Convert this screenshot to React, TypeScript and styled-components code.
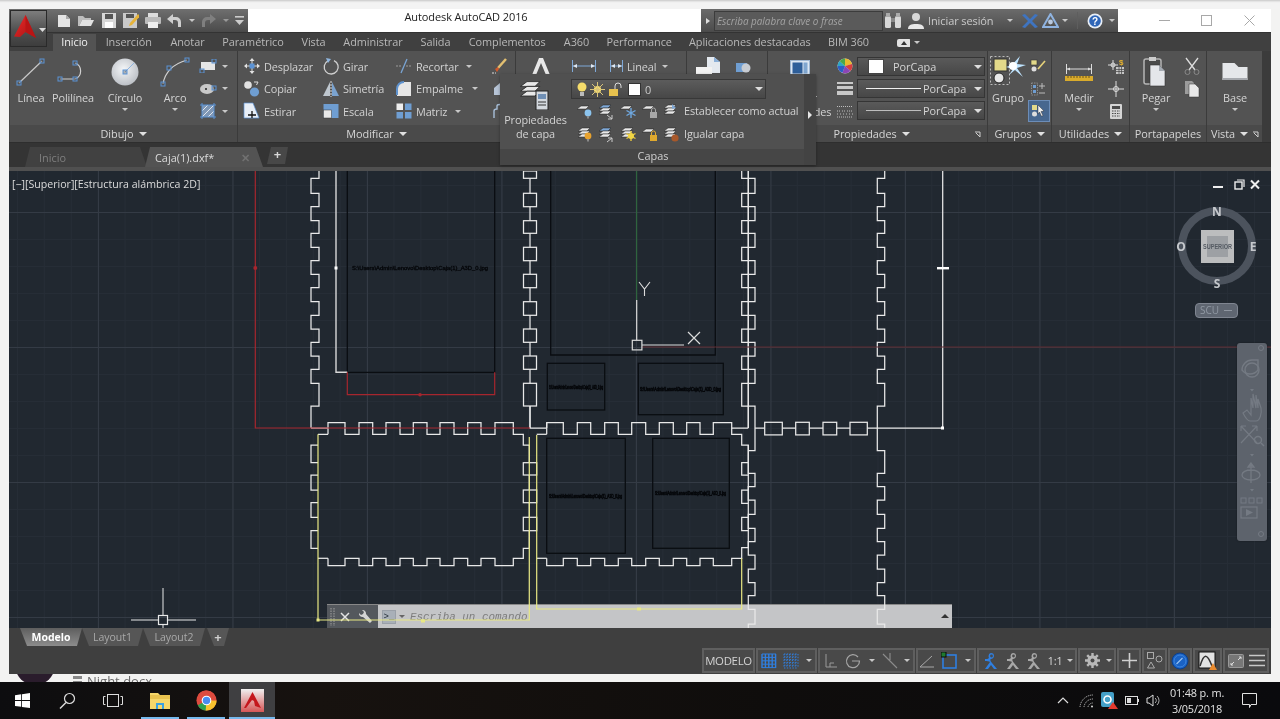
import React from 'react';
import styled, { createGlobalStyle } from 'styled-components';

const FONT = '"Open Sans","Noto Sans","Liberation Sans",sans-serif';
const BLUE = '#5b93d6';

const Global = createGlobalStyle`
  html, body { margin: 0; padding: 0; background: #f3f3f2; overflow: hidden; }
  #root { width: 1280px; height: 719px; }
  * { box-sizing: border-box; }
`;

const Page = styled.div`
  width: 1280px; height: 719px; overflow: hidden; display: flex; flex-direction: column;
  font-family: ${FONT}; font-size: 11px; background: #f3f3f2; color: #ddd; filter: blur(0.4px);
`;
const TopStrip = styled.div`
  height: 9px; flex: none;
  background: linear-gradient(#c9c9c9 0, #ededed 2px, #f3f3f3 3px);
`;
const Window = styled.div`
  position: relative; margin-left: 9px; width: 1262px; height: 665px; flex: none;
  display: flex; flex-direction: column; background: #3f3f3f;
`;

/* title bar */
const TitleBar = styled.div`display: flex; height: 23px; background: #fff; flex: none;`;
const QuickBar = styled.div`
  width: 239px; display: flex; align-items: center; padding-left: 44px;
  background: linear-gradient(#6f6f6f, #4a4a4a);
`;
const QuickSlot = styled.div<{ $w: number; $ml?: number }>`
  width: ${p => p.$w}px; margin-left: ${p => p.$ml ?? 0}px; height: 17px; display: flex; align-items: center; justify-content: center; flex: none;
`;
const AppTitle = styled.div`
  flex: 1; text-align: center; padding-right: 17px; color: #222; font-size: 11px; line-height: 16px; letter-spacing: -0.1px;
`;
const SearchGroup = styled.div`
  width: 417px; display: flex; align-items: center;
  background: linear-gradient(#6b6b6b, #4b4b4b);
`;
const SearchArrow = styled.span`
  width: 0; height: 0; margin: 0 4px 0 5px; border-left: 4px solid #ddd; border-top: 3px solid transparent; border-bottom: 3px solid transparent;
`;
const SearchField = styled.div`
  width: 169px; height: 20px; border: 1px solid #3c3c3c; background: #5a5a5a; color: #a3a3a3;
  font-style: italic; font-size: 9.9px; line-height: 18px; padding-left: 2px; white-space: nowrap; overflow: hidden;
`;
const SignIn = styled.span`color: #c9c9c9; font-size: 11px; width: 71px; white-space: nowrap; letter-spacing: -0.1px;`;
const SearchDivider = styled.span`width: 16px; height: 17px; flex: none; display: flex; justify-content: center;
  &::before { content: ''; width: 1px; height: 100%; background: #5e5e5e; }
`;
const WinButtons = styled.div`width: 153px; display: flex; padding-left: 25px;`;
const WinButton = styled.div`width: 42.5px; height: 23px; display: flex; align-items: center; justify-content: center;`;
const LogoButton = styled.div`
  position: absolute; left: 1px; top: 1px; width: 37px; height: 37px; z-index: 4;
  border: 1px solid #2a2a2a; background: linear-gradient(#7d7d7d, #505050 55%, #3d3d3d);
`;

/* ribbon tabs */
const TabBar = styled.div`display: flex; height: 19px; background: #404040; padding-left: 44px; flex: none; align-items: flex-end; border-top: 1px solid #333;`;
const RibbonTab = styled.div<{ $w: number; $on?: boolean }>`
  width: ${p => p.$w}px; height: 17px; text-align: center; line-height: 16px; font-size: 10.9px; white-space: nowrap;
  color: ${p => (p.$on ? '#f0f0f0' : '#b8b8b8')}; background: ${p => (p.$on ? '#535353' : 'transparent')};
  letter-spacing: -0.05px; flex: none;
`;

/* ribbon */
const Ribbon = styled.div`display: flex; height: 92px; flex: none; background: #444; padding-left: 1px; border-bottom: 1px solid #2e2e2e;`;
const Panel = styled.div<{ $w: number }>`
  width: ${p => p.$w}px; flex: none; display: flex; flex-direction: column; border-right: 1px solid #3b3b3b;
`;
const PanelBody = styled.div`height: 74px; background: #535353; display: flex; flex: none;`;
const PanelTitle = styled.div<{ $pr?: number }>`
  position: relative; flex: 1; background: #4a4a4a; display: flex; align-items: center; justify-content: center; gap: 5px;
  color: #d6d6d6; font-size: 10.9px; padding-right: ${p => p.$pr ?? 0}px; letter-spacing: -0.05px; white-space: nowrap;
`;
const Launcher = styled.span<{ $r?: number }>`position: absolute; right: ${p => p.$r ?? 6}px; top: 6px; display: flex;`;
const Caret = styled.span<{ $c?: string }>`
  display: inline-block; width: 0; height: 0; flex: none;
  border-top: 3px solid ${p => p.$c ?? '#c8c8c8'}; border-left: 3px solid transparent; border-right: 3px solid transparent;
`;
const TitleCaret = styled(Caret)`border-top-width: 4px; border-left-width: 4px; border-right-width: 4px; border-top-color: #e0e0e0;`;
const LargeTool = styled.div<{ $w: number }>`
  width: ${p => p.$w}px; flex: none; display: flex; flex-direction: column; align-items: center; padding-top: 5px;
`;
const LargeIcon = styled.div<{ $h?: number; $mt?: number }>`
  height: ${p => p.$h ?? 32}px; margin-top: ${p => p.$mt ?? 0}px; display: flex; align-items: center; justify-content: center;
`;
const LargeLabel = styled.div<{ $mt?: number }>`
  margin-top: ${p => p.$mt ?? 3}px; line-height: 14px; color: #d4d4d4; font-size: 10.9px; letter-spacing: -0.1px; text-align: center; white-space: nowrap;
`;
const LargeCaret = styled(Caret)`margin-top: 3px;`;
const ToolGrid = styled.div`display: flex; padding: 4px 0 0 5px;`;
const ToolColumn = styled.div<{ $w: number; $pt?: number }>`
  width: ${p => p.$w}px; padding-top: ${p => p.$pt ?? 0}px; flex: none; display: flex; flex-direction: column;
`;
const SmallTool = styled.div`height: 22.5px; display: flex; align-items: center; white-space: nowrap;`;
const IconSlot = styled.div<{ $w?: number; $on?: boolean; $ml?: number }>`
  width: ${p => p.$w ?? 18}px; margin-left: ${p => p.$ml ?? 0}px; height: 22px; flex: none; display: flex; align-items: center; justify-content: center;
  ${p => (p.$on ? 'background:#47678f;border:1px solid #6c8db8;' : '')}
`;
const SmallLabel = styled.span`margin-left: 3px; color: #d2d2d2; font-size: 10.9px; letter-spacing: -0.12px;`;
const SideCaret = styled(Caret)<{ $ml: number }>`margin-left: ${p => p.$ml}px;`;
const Combo = styled.div`
  width: 128px; height: 19px; margin-bottom: 3px; border: 1px solid #353535; display: flex; align-items: center; position: relative;
  background: linear-gradient(#5a5a5a, #474747); color: #d4d4d4; font-size: 10.9px; padding-right: 2px;
`;
const ComboCaret = styled(Caret)`position: absolute; right: 2px; top: 7px; border-top-width: 4px; border-left-width: 4px; border-right-width: 4px; border-top-color: #ddd;`;
const Swatch = styled.span`width: 16px; height: 15px; background: #fff; margin: 0 9px 0 10px; border: 1px solid #444; flex: none;`;
const ComboLine = styled.span<{ $w: number; $c: string }>`width: ${p => p.$w}px; height: 1px; background: ${p => p.$c}; margin: 0 2px 0 8px; flex: none;`;
const ComboStack = styled.div`width: 128px; padding-top: 6px; flex: none;`;
const RibbonEnd = styled.div`flex: 1; background: #3b3b3b;`;

/* Capas popup */
const Popup = styled.div`
  position: absolute; left: 491px; top: 65px; width: 316px; height: 91px; z-index: 3; display: flex;
  background: #505050; box-shadow: 0 1px 3px rgba(0,0,0,.35);
`;
const PopupContent = styled.div`width: 304px; display: flex; flex-direction: column;`;
const PopupMain = styled.div`height: 75px; display: flex; flex: none;`;
const PopupLeft = styled.div`width: 71px; display: flex; flex-direction: column; align-items: center; padding-top: 6px; flex: none;`;
const PopupRight = styled.div`flex: 1;`;
const LayerCombo = styled.div`
  position: relative; width: 195px; height: 20px; margin-top: 5px; display: flex; align-items: center; padding-left: 5px; gap: 3px;
  border: 1px solid #383838; background: linear-gradient(#5c5c5c, #474747); color: #ccc; font-size: 10.9px;
`;
const LayerSwatch = styled.span`width: 13px; height: 13px; background: #fff; border: 1px solid #333; margin: 0 1px 0 2px;`;
const LayerRow = styled.div`height: 23px; display: flex; align-items: center; padding-left: 3px; color: #d2d2d2; font-size: 10.9px; white-space: nowrap; letter-spacing: -0.12px;`;
const LayerSlot = styled.div`width: 21.6px; height: 20px; display: flex; align-items: center; justify-content: center; flex: none;`;
const LayerText = styled.span`margin-left: 2px;`;
const PopupTitle = styled.div`flex: 1; background: #464646; color: #d0d0d0; font-size: 10.9px; text-align: center; line-height: 14px; padding-left: 2px;`;
const PopupSide = styled.div`flex: 1; background: #434343; display: flex; align-items: center; justify-content: center; padding-bottom: 9px;`;
const SideArrow = styled.span`width: 0; height: 0; border-left: 4px solid #e6e6e6; border-top: 4px solid transparent; border-bottom: 4px solid transparent;`;

/* file tabs */
const FileBar = styled.div`display: flex; height: 28px; flex: none; background: #343434; padding: 4px 0 0 16px; border-bottom: 4px solid #505050;`;
const FileTab = styled.div<{ $on?: boolean; $w: number; $ml?: number; $pl: number }>`
  width: ${p => p.$w}px; margin-left: ${p => p.$ml ?? 0}px; padding: 0 13px 0 ${p => p.$pl}px; height: 20px; flex: none;
  display: flex; align-items: center; justify-content: space-between; white-space: nowrap; font-size: 10.9px;
  color: ${p => (p.$on ? '#dadada' : '#7f7f7f')}; background: ${p => (p.$on ? '#535353' : '#414141')};
  clip-path: polygon(0 100%, 5px 0, calc(100% - 7px) 0, 100% 100%);
`;
const CloseMark = styled.span`color: #717171; font-size: 11px; font-weight: 700;`;
const AddTab = styled.div<{ $ml: number; $w: number; $h: number; $c: string }>`
  margin-left: ${p => p.$ml}px; width: ${p => p.$w}px; height: ${p => p.$h}px; flex: none;
  background: ${p => p.$c}; color: #d8d8d8; font-weight: 700; font-size: 13px; text-align: center; line-height: ${p => p.$h - 2}px;
  clip-path: polygon(0 100%, 4px 0, 100% 0, calc(100% - 3px) 100%);
`;

/* canvas */
const Canvas = styled.div`
  position: relative; height: 457px; flex: none; overflow: hidden; background-color: #212830;
  background-image:
    linear-gradient(to right, #343b45 1px, transparent 1px),
    linear-gradient(to bottom, #343b45 1px, transparent 1px),
    linear-gradient(to right, #262d36 1px, transparent 1px),
    linear-gradient(to bottom, #262d36 1px, transparent 1px);
  background-size: 134.5px 135px, 134.5px 135px, 26.9px 27px, 26.9px 27px;
  background-position: 89px 41px, 89px 41px, 8px 14px, 8px 14px;
`;
const ViewLabel = styled.div`position: absolute; left: 3px; top: 6px; color: #dcdcdc; font-size: 10.6px; z-index: 3; white-space: nowrap;`;
const DrawingSvg = styled.svg`position: absolute; left: 0; top: 0; z-index: 2; pointer-events: none;`;
const ViewButtons = styled.svg`position: absolute; left: 1203px; top: 8px; z-index: 3;`;
const CubeSvg = styled.svg`position: absolute; left: 1165px; top: 33px; z-index: 3;`;
const ScuPill = styled.div`
  position: absolute; left: 1186px; top: 132px; width: 43px; height: 15px; border-radius: 4px; z-index: 3;
  background: #5f6671; border: 1px solid #7f8590; color: #9098a3; font-size: 10px; line-height: 13px; padding-left: 4px; display: flex; align-items: center; gap: 5px;
`;
const ScuDash = styled.span`width: 8px; height: 1px; background: #8f96a0;`;
const NavBar = styled.div`
  position: absolute; left: 1228px; top: 172px; width: 30px; height: 198px; border-radius: 3px; z-index: 3;
  background: #5d636c; box-shadow: 0 0 2px rgba(0,0,0,.4);
`;
const CommandBar = styled.div`
  position: absolute; left: 318px; bottom: 0; width: 625px; height: 24px; z-index: 1; display: flex;
  background: #c4c5c7; border-top: 1px solid #888;
`;
const CommandTools = styled.div`
  width: 51px; flex: none; display: flex; align-items: center; background: #54585d; padding-left: 3px;
`;
const CommandPrompt = styled.div`
  flex: 1; display: flex; align-items: center; padding-left: 4px; position: relative;
`;
const PromptIcon = styled.div`
  width: 14px; height: 14px; border: 1px solid #9aa0a8; background: #a9b0b8; color: #26303a; font-family: "Liberation Mono", monospace;
  font-size: 9px; line-height: 12px; text-align: center; margin-right: 3px;
`;
const CommandText = styled.span`
  margin-left: 5px; font-family: "Liberation Mono", monospace; font-style: italic; font-size: 10.9px; color: #7d7d7d; white-space: nowrap;
`;
const CommandEnd = styled.span`
  position: absolute; right: 3px; top: 9px; width: 0; height: 0; border-bottom: 4px solid #333; border-left: 4px solid transparent; border-right: 4px solid transparent;
`;

/* bottom */
const BottomArea = styled.div`flex: 1; background: #3f3f3f; display: flex; flex-direction: column;`;
const LayoutTabs = styled.div`height: 19px; display: flex; padding-left: 11px; flex: none;`;
const LayoutTab = styled.div<{ $on?: boolean; $w: number }>`
  width: ${p => p.$w}px; height: 18px; flex: none; text-align: center; line-height: 18px; font-size: 10.5px;
  font-weight: ${p => (p.$on ? 700 : 400)}; color: ${p => (p.$on ? '#fff' : '#a9a9a9')};
  background: ${p => (p.$on ? 'linear-gradient(#5e5e5e,#8c8c8c)' : '#565656')};
  clip-path: polygon(0 0, 100% 0, calc(100% - 5px) 100%, 7px 100%);
`;
const LayoutPlus = styled(LayoutTab)`width: 22px; margin-left: 2px; font-size: 13px; font-weight: 700; color: #cfcfcf;`;
const StatusBar = styled.div`height: 25px; margin-top: 1px; display: flex; justify-content: flex-end; padding-right: 2px; gap: 1px; flex: none;`;
const StatusGroup = styled.div<{ $w: number }>`
  width: ${p => p.$w}px; flex: none; display: flex; align-items: center; border: 2px solid #5f5f5f; background: #494949;
`;
const StatusCell = styled.div<{ $w?: number }>`
  ${p => (p.$w ? `width:${p.$w}px;flex:none;` : 'flex:1;')} height: 100%; display: flex; align-items: center; justify-content: center;
  color: #d2d2d2; font-size: 11.4px; letter-spacing: -0.3px; white-space: nowrap;
`;

/* desktop */
const GapStrip = styled.div`height: 8px; flex: none; position: relative; overflow: hidden; display: flex; background: #f3f3f2;`;
const Portrait = styled.div`width: 40px; height: 40px; margin: -29px 0 0 15px; border-radius: 50%; background: #2a1c2c; flex: none;`;
const DocName = styled.div`margin-left: 18px; color: #6a6a6a; font-size: 13px; line-height: 15px; display: flex; gap: 5px; white-space: nowrap;`;
const DocGlyph = styled.span`width: 9px; height: 12px; border-top: 2px solid #888; margin-top: 2px; background: repeating-linear-gradient(#888 0 1px, transparent 1px 3px);`;
const Taskbar = styled.div`
  height: 37px; flex: none; display: flex; align-items: center; position: relative;
  background: linear-gradient(90deg, #0d0d0f, #17120f 25%, #0f0d0c 60%, #0a0a0d);
`;
const TaskSlot = styled.div<{ $w: number }>`width: ${p => p.$w}px; height: 37px; flex: none; display: flex; align-items: center; justify-content: center;`;
const TaskApp = styled.div<{ $on?: boolean }>`
  width: 46px; height: 37px; flex: none; display: flex; align-items: center; justify-content: center; position: relative;
  background: ${p => (p.$on ? '#3f3f41' : 'transparent')};
  &::after { content: ''; position: absolute; bottom: 0; left: ${p => (p.$on ? 0 : 4)}px; right: ${p => (p.$on ? 0 : 4)}px; height: 2px; background: #76b9ed; }
`;
const TrayArea = styled.div`margin-left: auto; display: flex; align-items: center;`;
const TrayIcon = styled.div<{ $w: number }>`width: ${p => p.$w}px; display: flex; justify-content: center; flex: none;`;
const Clock = styled.div`width: 64px; text-align: center; color: #e2e2e2; font-size: 10.9px; line-height: 16px; white-space: nowrap; letter-spacing: -0.15px;`;

/* ----- icons ----- */
const Sq = ({ x, y }: { x: number; y: number }) => <rect x={x - 2} y={y - 2} width="4" height="4" fill="#53535366" stroke={BLUE} strokeWidth="1" />;

const LineIcon = () => (<svg width="30" height="28"><line x1="3" y1="25" x2="26" y2="3" stroke="#c8c8c8" strokeWidth="1.2" /><Sq x={3} y={25} /><Sq x={26} y={3} /></svg>);
const PolyIcon = () => (<svg width="32" height="28"><path d="M3 21H18A8.5 8.5 0 0 0 18 5" fill="none" stroke="#d0d0d0" strokeWidth="1.2" /><Sq x={3} y={21} /><Sq x={18} y={21} /><Sq x={18} y={5} /></svg>);
const CircleIcon = () => (<svg width="30" height="30"><defs><radialGradient id="cg" cx="45%" cy="40%" r="65%"><stop offset="0" stopColor="#f4f6f8" /><stop offset="1" stopColor="#b8bcc2" /></radialGradient></defs><circle cx="15" cy="15" r="13.5" fill="url(#cg)" /><line x1="15" y1="15" x2="24" y2="6" stroke="#8db4e0" /><Sq x={15} y={15} /></svg>);
const ArcIcon = () => (<svg width="30" height="30"><path d="M3 27Q6 9 27 3" fill="none" stroke="#d0d0d0" strokeWidth="1.2" /><Sq x={3} y={27} /><Sq x={9} y={11} /><Sq x={27} y={3} /></svg>);
const RectIcon = () => (<svg width="18" height="14"><rect x="2" y="3" width="14" height="8" fill="#e6e6e6" /><Sq x={3} y={12} /><Sq x={15} y={2} /></svg>);
const BlobIcon = () => (<svg width="18" height="14"><ellipse cx="8" cy="7" rx="7" ry="5" fill="#c9c9c9" /><circle cx="7" cy="7" r="1" fill="#222" /><Sq x={15} y={6} /></svg>);
const HatchIcon = () => (<svg width="18" height="18"><rect x="3" y="3" width="12" height="12" fill="#7f97b5" /><path d="M3 9l6-6M3 15L15 3M9 15l6-6" stroke="#dfe6ef" /><path d="M3 1v16M15 1v16M1 3h16M1 15h16" stroke={BLUE} fill="none" /></svg>);
const MoveIcon = () => (<svg width="18" height="18"><path d="M9 1L6.5 4h5zM9 17l-2.5-3h5zM1 9l3-2.5v5zM17 9l-3-2.5v5z" fill="#e2e2e2" /><path d="M9 4v10M4 9h10" stroke="#ddd" /><rect x="6.5" y="6.5" width="5" height="5" fill={BLUE} /></svg>);
const CopyIcon = () => (<svg width="18" height="18"><circle cx="5" cy="5" r="3.8" fill="#e2e2e2" /><circle cx="11.5" cy="12" r="4.6" fill="#6f9ed2" /><path d="M11 2h4l-1.5 3" fill="none" stroke="#ddd" /></svg>);
const StretchIcon = () => (<svg width="18" height="18"><path d="M1 1h9l6 15H1z" fill="#e8eef6" stroke="#5b93d6" strokeWidth=".7" /><path d="M9 9v7M5 13h8" stroke="#111" strokeWidth="1.3" /></svg>);
const RotateIcon = () => (<svg width="18" height="18"><path d="M6 3.8a7 7 0 1 0 6-.2" fill="none" stroke="#d0d0d0" strokeWidth="1.3" /><path d="M4 1l5 1-3 4z" fill="#8fb5de" /></svg>);
const MirrorIcon = () => (<svg width="18" height="18"><path d="M1 16L8 2v14z" fill="#bfc7cf" /><path d="M17 16L10 2v14z" fill="#7ba3cf" /><path d="M9 1v16" stroke="#ddd" strokeDasharray="2 1" /></svg>);
const ScaleIcon = () => (<svg width="18" height="18"><rect x="1.5" y="2" width="15" height="14" fill="#6f9ed2" /><rect x="1.5" y="8" width="8" height="8" fill="#e8e8e8" stroke="#333" strokeWidth=".5" /></svg>);
const TrimIcon = () => (<svg width="18" height="18"><path d="M1 9h6M11 9h6" stroke="#9c9c9c" strokeDasharray="2 1" /><path d="M6 16L12 2" stroke="#79a4d4" strokeWidth="1.3" /></svg>);
const FilletIcon = () => (<svg width="18" height="18"><path d="M2 16V9a7 7 0 0 1 7-7h7v14z" fill="#e6e6e6" /><path d="M2 15V9a7 7 0 0 1 7-7" fill="none" stroke="#5f93cf" strokeWidth="2" /></svg>);
const ArrayIcon = () => (<svg width="18" height="18"><rect x="1.5" y="1.5" width="6.5" height="6.5" fill="#eee" /><rect x="10" y="1.5" width="6.5" height="6.5" fill="#6f9ed2" /><rect x="1.5" y="10" width="6.5" height="6.5" fill="#6f9ed2" /><rect x="10" y="10" width="6.5" height="6.5" fill="#6f9ed2" /></svg>);
const BrushIcon = () => (<svg width="18" height="18"><path d="M15 2L7 11" stroke="#e2bf71" strokeWidth="2.5" /><path d="M4 12l3-2 1 2-2 3z" fill="#d2592b" /><path d="M1 16h4" stroke="#ddd" strokeDasharray="2 1" /></svg>);
const CubeSmall = () => (<svg width="18" height="18"><path d="M3 8l6-5v12H3z" fill="#b6c4d6" /><path d="M9 3h6v12H9z" fill="#7ea6d2" /></svg>);
const ChainIcon = () => (<svg width="18" height="18"><path d="M3 16V9c0-2 2-2 3-2V4c0-2 5-2 5 0v5h4v6" fill="none" stroke="#a8bfd9" strokeWidth="1.4" /></svg>);
const TextIcon = () => (<svg width="24" height="22"><path d="M3 20L10 3h4l7 17h-4L12 8 7 20z" fill="#e8e8e8" /></svg>);
const DimIcon = ({ w }: { w: number }) => (<svg width={w} height="14"><path d={`M1.5 1v12M${w - 1.5} 1v12M2 7H${w - 2}`} stroke="#7fa9d8" strokeWidth="1" fill="none" /><path d={`M2 7l4-2v4zM${w - 2} 7l-4-2v4z`} fill="#dfe8f2" /></svg>);
const InsertIcon = () => (<svg width="30" height="22"><path d="M12 1h7l6 5v11H12z" fill="#e4e9ef" /><path d="M19 1v5h6z" fill="#8cb0d8" /><rect x="1" y="11" width="16" height="7" fill="#f2f2f2" /></svg>);
const BlockIcon = () => (<svg width="18" height="16"><rect x="2" y="5" width="11" height="9" fill="#6f9ed2" /><circle cx="12" cy="10" r="4.5" fill="#c8ccd2" /></svg>);
const MatchIcon = () => (<svg width="20" height="16"><rect x=".5" y=".5" width="19" height="15" fill="#dce7f3" stroke="#9fb7d2" /><rect x="2.5" y="2.5" width="10" height="11" fill="#2e5f9a" /><rect x="13.5" y="2.5" width="4" height="11" fill="#7fa6d0" /></svg>);
const WheelIcon = () => (<svg width="16" height="16" viewBox="0 0 16 16"><circle cx="8" cy="8" r="7.5" fill="#d9d9d9" /><path d="M8 8V.5A7.5 7.5 0 0 1 15 6z" fill="#e8b92f" /><path d="M8 8l7-2a7.5 7.5 0 0 1-1.5 7z" fill="#d63f3f" /><path d="M8 8l5.5 5a7.5 7.5 0 0 1-8 1.7z" fill="#8c45b5" /><path d="M8 8l-2.5 6.7A7.5 7.5 0 0 1 .5 8z" fill="#2d5fc4" /><path d="M8 8H.5A7.5 7.5 0 0 1 2.5 3z" fill="#2da5c4" /><path d="M8 8L2.5 3A7.5 7.5 0 0 1 8 .5z" fill="#49a84a" /></svg>);
const WeightIcon = () => (<svg width="16" height="15"><rect x="0" y="1" width="16" height="2" fill="#c8c8c8" /><rect x="0" y="5" width="16" height="3" fill="#c8c8c8" /><rect x="0" y="10" width="16" height="4" fill="#c8c8c8" /></svg>);
const TypeIcon = () => (<svg width="16" height="13"><path d="M0 1.5h16M0 6h3M5 6h3M10 6h3M14 6h2M0 9h1M3 9h1M6 9h1M9 9h1M12 9h1M15 9h1M0 12h16" stroke="#bdbdbd" strokeDasharray="1 1" /></svg>);
const GroupIcon = () => (<svg width="36" height="32"><rect x=".5" y=".5" width="19" height="28" fill="none" stroke="#bbb" strokeDasharray="2 2" /><rect x="4" y="3" width="13" height="12" fill="#e2d98a" stroke="#333" /><circle cx="9" cy="22" r="5" fill="#e8e8e8" stroke="#222" /><path d="M22 9L30 0l-3 8 9 1-9 3 6 9-8-7-6 5 4-6-7-2z" fill="#bfe4ff" /><circle cx="23" cy="10" r="4" fill="#fff" /></svg>);
const GroupEditIcon = () => (<svg width="16" height="14"><rect x="1" y="1" width="6" height="5" fill="#e2d98a" stroke="#333" strokeWidth=".6" /><circle cx="4" cy="10" r="2.5" fill="#ddd" /><path d="M8 10l7-8" stroke="#e6d27a" strokeWidth="1.6" /></svg>);
const GroupPlusIcon = () => (<svg width="16" height="14"><rect x="1.5" y="1" width="6" height="12" fill="none" stroke="#8d8d8d" strokeDasharray="1.5 1" /><rect x="3" y="3" width="3" height="3" fill="#6f9ed2" /><rect x="3" y="8" width="3" height="3" fill="#6f9ed2" /><path d="M12 1v6M9 4h6M9 11h6" stroke="#bbb" /></svg>);
const GroupSelIcon = () => (<svg width="16" height="14"><rect x="1" y="1" width="5" height="5" fill="#e2d98a" /><circle cx="3.5" cy="10" r="2.5" fill="#ddd" /><path d="M7 1l6 6-3 .5 2 4-1.5.8L8.5 8 7 10z" fill="#eee" stroke="#222" strokeWidth=".4" /></svg>);
const RulerIcon = () => (<svg width="28" height="22"><path d="M1.5 3v10M26.5 3v10" stroke="#ddd" /><path d="M2 8h24" stroke="#ddd" /><path d="M2 8l3-1.6v3.2zM26 8l-3-1.6v3.2z" fill="#ddd" /><rect x="0" y="15" width="28" height="5" fill="#d9ab2c" /><path d="M3 15v2M6 15v2M9 15v2M12 15v2M15 15v2M18 15v2M21 15v2M24 15v2" stroke="#6f541a" /></svg>);
const IdIcon = () => (<svg width="18" height="17"><path d="M6 2v10M1 7h10" stroke="#ddd" /><circle cx="6" cy="7" r="2" fill="none" stroke="#ddd" /><rect x="9" y="9" width="8" height="7" fill="#c6c6c6" /><path d="M9 11.5h8M9 13.5h8M12 9v7M14.5 9v7" stroke="#444" strokeWidth=".7" /><text x="12" y="7" fontSize="8" fontWeight="700" fill="#e8b42e" fontFamily="Liberation Sans">$</text></svg>);
const PointIcon = () => (<svg width="18" height="16"><path d="M9 0v16M1 8h16" stroke="#ddd" /><circle cx="9" cy="8" r="2.5" fill="none" stroke="#ddd" /></svg>);
const CalcIcon = () => (<svg width="12" height="15"><rect width="12" height="15" rx="1" fill="#d5d5d5" /><rect x="2" y="2" width="8" height="3" fill="#4a4a4a" /><path d="M2 7h8M2 9.5h8M2 12h8" stroke="#4a4a4a" strokeDasharray="1.5 1" /></svg>);
const PasteIcon = () => (<svg width="26" height="32"><rect x="1" y="3" width="17" height="25" rx="2" fill="#4a4a4a" stroke="#b5b5b5" strokeWidth="1.5" /><rect x="6" y="1" width="7" height="4" fill="#ccc" /><path d="M7 9h9l6 6v15H7z" fill="#e4e6ea" stroke="#333" strokeWidth=".6" /><path d="M16 9v6h6" fill="#a5abb3" /></svg>);
const ScissorsIcon = () => (<svg width="16" height="18"><path d="M2 1l9 12M14 1L5 13" stroke="#ddd" strokeWidth="1.3" /><circle cx="3.5" cy="15" r="2.5" fill="none" stroke="#888" /><circle cx="12.5" cy="15" r="2.5" fill="none" stroke="#888" /></svg>);
const CopyDocIcon = () => (<svg width="16" height="18"><path d="M1 1h7l2 2v11H1z" fill="#9c9c9c" /><path d="M5 4h6l4 4v9H5z" fill="#e8e8e8" stroke="#333" strokeWidth=".5" /></svg>);
const BaseIcon = () => (<svg width="26" height="20"><path d="M.5 1h12l4 4h9v13H.5z" fill="#e5e7ea" /><path d="M.5 17h25" stroke="#a6a9ae" strokeWidth="2" /></svg>);
const LauncherIcon = () => (<svg width="7" height="7"><path d="M1 1h5v5M6 6L2 2" stroke="#cfcfcf" fill="none" /></svg>);

const Stack = ({ blue, n = 3 }: { blue?: boolean; n?: number }) => (
  <>{Array.from({ length: n }).map((_, i) => (<path key={i} d={`M1 ${4 + i * 3}L5 ${1 + i * 3}h8L10 ${4 + i * 3}z`} fill={blue && i === 0 ? '#7fa8d6' : '#e8e8e8'} stroke="#222" strokeWidth=".5" />))}</>
);
const L = ({ n = 1, blue, children }: { n?: number; blue?: boolean; children?: React.ReactNode }) => (<svg width="20" height="18"><g transform={n === 1 ? 'translate(1,3)' : 'translate(2,2)'}><Stack n={n} blue={blue} /></g>{children}</svg>);
const Bulb = ({ c }: { c: string }) => (<g><circle cx="13" cy="11" r="3.4" fill={c} /><rect x="12" y="14" width="2" height="2.5" fill="#8a8a8a" /></g>);
const Snow = ({ c }: { c: string }) => (<path d="M13 6v10M8.5 8.5l9 5M17.5 8.5l-9 5" stroke={c} strokeWidth="1.4" />);
const Lk = ({ c }: { c: string }) => (<g><rect x="10" y="10" width="7" height="6" fill={c} /><path d="M11.5 10V8a2 2 0 0 1 4 0v2" fill="none" stroke={c} /></g>);

const BigStack = () => (<svg width="34" height="30"><g transform="scale(1.6)"><Stack n={3} /></g><rect x="17" y="11" width="12" height="19" fill="#d3d8de" stroke="#222" /><rect x="19" y="14" width="8" height="5" fill="#6f8fb5" /><path d="M19 22h8M19 25h8" stroke="#333" /></svg>);

const LogoA = () => (
  <svg width="35" height="35">
    <defs><linearGradient id="ra" x1="0" y1="0" x2="1" y2="1"><stop offset="0" stopColor="#ec2a2a" /><stop offset="1" stopColor="#a51212" /></linearGradient></defs>
    <path d="M14.5 4L3 25.500l6 .5 5.500-5 8 4.500 2.500 1.500z" fill="url(#ra)" />
    <path d="M14.500 4L25 27l-10.500-6z" fill="#b91515" />
    <path d="M28 17h7l-3.500 4z" fill="#dcdcdc" />
  </svg>
);

const QNew = () => (<svg width="16" height="16"><path d="M2 2h8l4 4v8H2z" fill="#e4e4e4" /><path d="M10 2v4h4" fill="#aaa" /></svg>);
const QOpen = () => (<svg width="18" height="14"><path d="M1 12V2h5l2 2h6v2H5l-3 6z" fill="#bdbdbd" /><path d="M2 12l3-6h12l-3 6z" fill="#e2e2e2" /></svg>);
const QSave = () => (<svg width="14" height="15"><rect width="14" height="15" fill="#d7d7d7" /><rect x="3" y="1" width="8" height="5" fill="#555" /><rect x="3" y="9" width="8" height="6" fill="#fff" /></svg>);
const QSaveAs = () => (<svg width="16" height="15"><rect width="14" height="15" fill="#c9c9c9" /><rect x="3" y="1" width="8" height="4" fill="#555" /><path d="M15 1l-8 9-1 3 3-1 8-9z" fill="#e6b338" /></svg>);
const QPrint = () => (<svg width="16" height="15"><rect x="3" y="0" width="10" height="4" fill="#ddd" /><rect y="4" width="16" height="7" rx="1" fill="#bbb" /><rect x="3" y="9" width="10" height="6" fill="#eee" /></svg>);
const QUndo = ({ dim }: { dim?: boolean }) => (<svg width="14" height="13"><path d="M0 5l6-5v3h3a5 5 0 0 1 5 5v5h-3V9a3 3 0 0 0-3-3H6v4z" fill={dim ? '#7f7f7f' : '#cfcfcf'} transform={dim ? 'translate(14,0) scale(-1,1)' : ''} /></svg>);
const QMenu = () => (<svg width="9" height="9"><rect width="9" height="1.6" fill="#ccc" /><path d="M0 4h9L4.5 9z" fill="#ccc" /></svg>);

const Binoculars = () => (<svg width="18" height="16"><rect x="1" y="3" width="6" height="12" rx="1.5" fill="#d8d8d8" /><rect x="11" y="3" width="6" height="12" rx="1.5" fill="#d8d8d8" /><rect x="2" y="0" width="4" height="4" fill="#aaa" /><rect x="12" y="0" width="4" height="4" fill="#aaa" /><rect x="7" y="5" width="4" height="4" fill="#888" /></svg>);
const UserIcon = () => (<svg width="16" height="17"><circle cx="8" cy="5" r="4" fill="#d8d8d8" /><path d="M0 17c0-4 3-5 8-5s8 1 8 5z" fill="#e6e6e6" /></svg>);
const XIcon = () => (<svg width="18" height="14"><path d="M1 1l3-1 5 5 5-5 3 1-6 6 6 6-3 1-5-5-5 5-3-1 6-6z" fill="#3f74c0" /></svg>);
const TriIcon = () => (<svg width="17" height="15"><path d="M8.5 1L16 14H1z" fill="none" stroke="#8fb3e0" strokeWidth="2" /><circle cx="8.5" cy="9" r="2.4" fill="#b9c9df" /></svg>);
const HelpIcon = () => (<svg width="16" height="16"><circle cx="8" cy="8" r="7.5" fill="#e8eef6" /><circle cx="8" cy="8" r="5.8" fill="#2f66b8" /><text x="8" y="11.5" textAnchor="middle" fontSize="10" fontWeight="700" fontFamily="Liberation Sans" fill="#fff">?</text></svg>);
const CloudIcon = () => (<svg width="14" height="8"><rect width="14" height="8" rx="2" fill="#e2e2e2" /><path d="M4 6h6L7 2z" fill="#333" /></svg>);

/* status icons */
const GridIcon = ({ fine }: { fine?: boolean }) => (<svg width="16" height="16">{Array.from({ length: fine ? 6 : 5 }).map((_, i) => (<g key={i}><path d={`M${1 + i * (fine ? 2.8 : 3.4)} 1V15`} stroke="#2f7fe0" strokeWidth={fine ? 1 : 1.4} strokeDasharray={fine ? '1.4 1.4' : undefined} /><path d={`M1 ${1 + i * (fine ? 2.8 : 3.4)}H15`} stroke="#2f7fe0" strokeWidth={fine ? 1 : 1} strokeDasharray={fine ? '1.4 1.4' : undefined} /></g>))}</svg>);
const OrthoIcon = () => (<svg width="14" height="16"><path d="M2 1v13h11" fill="none" stroke="#9a9a9a" /><path d="M6 14v-4h4" fill="none" stroke="#9a9a9a" /></svg>);
const PolarIcon = () => (<svg width="16" height="16"><path d="M13 4a6.5 6.5 0 1 0 1.5 4H7" fill="none" stroke="#a5a5a5" strokeWidth="1.2" /></svg>);
const IsoIcon = () => (<svg width="18" height="18"><path d="M2 2l14 14M9 1v7" stroke="#8d8d8d" strokeWidth="1.1" /></svg>);
const AngleIcon = () => (<svg width="16" height="16"><path d="M1 14h14M1 14L13 3" stroke="#a8a8a8" fill="none" /></svg>);
const SnapIcon = () => (<svg width="17" height="17"><rect x="2" y="3" width="13" height="13" fill="none" stroke="#2f7fe0" strokeWidth="1.6" /><rect x="0" y="0" width="5" height="5" fill="#1f7a2e" stroke="#0a0a0a" /></svg>);
const AnnoIcon = ({ c }: { c: string }) => (<svg width="18" height="18"><path d="M9 1c2 0 3 1 3 3s-2 3-3 3-1 2 1 4l5 6h-3l-3-4-3 4H3l5-7c-1-1-3-1-5-1V7c2 0 3 0 4-1-1-2 0-5 2-5z" fill={c} /><circle cx="9.5" cy="4" r="1.4" fill="#494949" /></svg>);
const GearIcon = () => (<svg width="15" height="15"><circle cx="7.5" cy="7.5" r="5.2" fill="#b8b8b8" /><path d="M7.5 0v15M0 7.5h15M2.2 2.2l10.6 10.6M12.8 2.2L2.2 12.8" stroke="#b8b8b8" strokeWidth="2.4" /><circle cx="7.5" cy="7.5" r="2" fill="#494949" /></svg>);
const PlusIcon = () => (<svg width="15" height="15"><path d="M7.5 0v15M0 7.5h15" stroke="#d0d0d0" strokeWidth="1.6" /></svg>);
const ShapesIcon = () => (<svg width="16" height="17"><rect x=".5" y=".5" width="6" height="6" fill="none" stroke="#aaa" /><circle cx="12" cy="7" r="3" fill="none" stroke="#aaa" /><path d="M4 10l3.5 6H.5z" fill="none" stroke="#aaa" /></svg>);
const BlueCircle = () => (<svg width="18" height="18"><circle cx="9" cy="9" r="8" fill="#1a62c4" stroke="#0c3f8a" /><path d="M5.5 12l6-6" stroke="#9cc4f0" strokeWidth="1.1" /><circle cx="9" cy="9" r="6" fill="none" stroke="#3d84dc" /></svg>);
const GraphIcon = () => (<svg width="20" height="19"><rect x="1" y="1" width="16" height="16" fill="#e2e2e2" stroke="#111" /><path d="M2 15c4-13 7-13 12 0" fill="none" stroke="#333" strokeWidth="1.6" /><path d="M15 12l4 7h-8z" fill="#e88a2e" /></svg>);
const FullIcon = () => (<svg width="16" height="14"><rect x=".5" y=".5" width="15" height="13" rx="1" fill="#777" stroke="#999" /><path d="M3 11l3-3M13 3l-3 3M3 9v2h2M13 5V3h-2" stroke="#ddd" fill="none" /></svg>);
const MenuIcon = () => (<svg width="16" height="13"><path d="M0 1.5h16M0 6.5h16M0 11.5h16" stroke="#c8c8c8" strokeWidth="1.5" /></svg>);

const WinLogo = () => (<svg width="15" height="15"><path d="M0 2.2l6.2-.9V7H0zM7 1.2L15 0v7H7zM0 8h6.2v5.8L0 12.9zM7 8h8v7l-8-1.1z" fill="#fff" /></svg>);
const SearchIcon = () => (<svg width="17" height="17"><circle cx="10.5" cy="6.5" r="5" fill="none" stroke="#ddd" strokeWidth="1.2" /><path d="M7 10.5L1 16.5" stroke="#ddd" strokeWidth="1.4" /></svg>);
const TaskView = () => (<svg width="20" height="13"><rect x="4.5" y=".5" width="11" height="12" fill="none" stroke="#ddd" /><path d="M2.5 2.5h-2v8h2M17.5 2.5h2v8h-2" fill="none" stroke="#ddd" /></svg>);
const ExplorerIcon = () => (<svg width="20" height="17"><path d="M0 3V1h8l2 2h10v14H0z" fill="#f5d76a" /><rect y="3" width="20" height="4" fill="#e8c24e" /><rect x="6" y="11" width="8" height="6" fill="#3aa2e0" /><rect x="8" y="13" width="4" height="4" fill="#f5d76a" /></svg>);
const ChromeIcon = () => (<svg width="21" height="21" viewBox="0 0 48 48"><circle cx="24" cy="24" r="23" fill="#dd4b3e" /><path d="M24 24L4 35A23 23 0 0 0 24 47h2z" fill="#2fa14f" /><path d="M24 24h23A23 23 0 0 1 22 47z" fill="#f9c22e" /><path d="M24 14h20a23 23 0 0 0-4-6A23 23 0 0 0 4 12l10 17z" fill="#dd4b3e" /><circle cx="24" cy="24" r="11" fill="#fff" /><circle cx="24" cy="24" r="8.5" fill="#4a8cf0" /></svg>);
const TaskAcad = () => (<svg width="23" height="23"><defs><linearGradient id="ta" x1="0" y1="0" x2="0" y2="1"><stop offset="0" stopColor="#f0f0f0" /><stop offset="1" stopColor="#d65656" /></linearGradient></defs><rect width="23" height="23" fill="url(#ta)" /><path d="M11.5 3L20 19l-6-2-1-5-2-1-6 8H3z" fill="#c4161c" /></svg>);
const TrayWifi = () => (<svg width="16" height="14"><path d="M1 13a13 13 0 0 1 13-12M5 13a9 9 0 0 1 9-8M9 13a5 5 0 0 1 5-4" fill="none" stroke="#bbb" strokeDasharray="1.2 .8" /><circle cx="13" cy="12.5" r="1" fill="#ddd" /></svg>);
const TrayE = () => (<svg width="17" height="18"><rect x="0" y="0" width="13" height="15" rx="2" fill="#44a0c8" /><circle cx="6.5" cy="7.5" r="3.5" fill="none" stroke="#fff" strokeWidth="1.6" /><path d="M12 10l5 7H7z" fill="#e23a2e" /></svg>);
const TrayBatt = () => (<svg width="14" height="9"><rect x=".5" y=".5" width="12" height="8" fill="none" stroke="#ddd" /><rect x="2" y="2" width="4" height="5" fill="#ddd" /><rect x="13" y="3" width="1" height="3" fill="#ddd" /></svg>);
const TraySound = () => (<svg width="16" height="13"><path d="M1 4h2l4-3v11L3 9H1z" fill="none" stroke="#ddd" /><path d="M9 4a3 3 0 0 1 0 5M11 2a6 6 0 0 1 0 9" fill="none" stroke="#aaa" /></svg>);
const TrayChat = () => (<svg width="15" height="15"><path d="M.5.5h14v11H9l-1.5 3V11.500H.5z" fill="none" stroke="#e2e2e2" /></svg>);

/* drawing helpers */
const T = [171, 178.3, 193.3, 206.7, 220.7, 233.3, 247.3, 260.7, 274.3, 287.7, 301.7, 315.3, 329, 342.3, 356, 369.3, 383.3, 406, 428];
const T2 = [428, 450.7, 473.3, 486.7, 500, 514.3, 528.3, 541.7, 555, 569, 582.7, 595.7, 609.3, 624, 629];
const zigV = (a: number, b: number, ys: number[]) => {
  let d = `M${a} ${ys[0]}`;
  for (let i = 1; i < ys.length; i++) {
    d += `V${ys[i]}`;
    if (i < ys.length - 1) d += `H${i % 2 === 1 ? b : a}`;
  }
  return d;
};
const zigH = (x0: number, y0: number, xs: number[], hi: number, lo: number, startHi = true) => {
  let d = `M${x0} ${y0}`;
  let up = startHi;
  for (const x of xs) {
    d += `V${up ? hi : lo}H${x}`;
    up = !up;
  }
  return d;
};
const WH = '#e9e9e9';
const YL = '#e8e884';
const BK = '#0a0d11';
const RD = '#a6262e';
const TXT = 'S:\\Users\\Admin\\Lenovo\\Desktop\\Caja(1)_A3D_0.jpg';

const Drawing = () => (
  <DrawingSvg width="1262" height="457" viewBox="9 171 1262 457">
    <g fill="none" stroke={BK} strokeWidth="1.3">
      <path d="M347.3 171V372.3H494.7V171" />
      <path d="M550.7 171V355H715.3V171" />
      <rect x="547.3" y="363.3" width="57.4" height="46.7" />
      <rect x="638.3" y="363.3" width="85" height="51.4" />
      <rect x="546.7" y="438.3" width="78.6" height="115" />
      <rect x="652.7" y="438.3" width="76.6" height="110" />
    </g>
    <g fill="#05070a" stroke="#05070a" fontFamily="Liberation Sans, sans-serif">
      <text x="352" y="270" fontSize="5" strokeWidth=".3" textLength="136" lengthAdjust="spacingAndGlyphs">{TXT}</text>
      <text x="549" y="389" fontSize="4.5" strokeWidth=".7" textLength="54" lengthAdjust="spacingAndGlyphs">{TXT}</text>
      <text x="640" y="391" fontSize="4.5" strokeWidth=".7" textLength="81" lengthAdjust="spacingAndGlyphs">{TXT}</text>
      <text x="549" y="498" fontSize="4.5" strokeWidth=".7" textLength="73" lengthAdjust="spacingAndGlyphs">{TXT}</text>
      <text x="655" y="495" fontSize="4.5" strokeWidth=".7" textLength="71" lengthAdjust="spacingAndGlyphs">{TXT}</text>
    </g>
    <g fill="none" stroke={WH} strokeWidth="1.25">
      <path d={zigV(319, 311, T)} />
      {T.slice(0, -1).map((y, i) =>
        i % 2 === 0 ? <rect key={i} x="523.5" y={y} width="13" height={T[i + 1] - y} /> : <path key={i} d={`M530 ${y}V${T[i + 1]}`} />
      )}
      <path d="M530 406V428H546.7" />
      <path d={zigH(328, 434.3, [345, 359, 372.7, 386, 400, 413.3, 427, 440, 454, 467.7, 481, 495, 513.3], 422.7, 434.3) + 'V434.3H523.3V445H529.3'} />
      <path d="M311 428H328M318 434.3H328" />
      <path d="M318 445H311V462.7H318M318 475H311V490H318M318 502.7H311V517.3H318M318 530.7H311V548.3H318" />
      <path d="M318 558.3H328" />
      <path d={zigH(328, 558.3, [345, 359, 372.7, 386, 400, 413.3, 427, 440, 454, 467.7, 481, 495, 513.3], 558.3, 565.7, false) + 'V558.3H523.3V548.3H529.3'} />
      {[[462.7, 475], [490, 502.7], [517.3, 530.7]].map(([a, b], i) => (<rect key={i} x="523.3" y={a} width="13.4" height={b - a} />))}
      <path d="M529.3 445V462.7M529.3 475V490M529.3 502.7V517.3M529.3 530.7V548.3" />
      <path d="M536.7 434.3H546.7" />
      <path d={zigH(546.7, 428, [563.3, 577.3, 590.7, 604.7, 618.3, 631.7, 645.7, 659.3, 673.3, 686.7, 700, 713.3, 731.7], 422.7, 434.3) + 'V434.3H741.7V445H748.3V450'} />
      <path d="M546.7 422.7V434.3M731.7 428H748.3" />
      <path d="M536.7 558.3H546.7" />
      <path d={zigH(546.7, 558.3, [563.3, 577.3, 590.7, 604.7, 618.3, 631.7, 645.7, 659.3, 673.3, 686.7, 700, 713.3, 731.7], 558.3, 565.7, false) + 'V558.3H741.7V547.7H748.3'} />
      <path d="M748.3 462.7H741.7V475H748.3M748.3 490H741.7V503.3H748.3M748.3 517.3H741.7V530.7H748.3" />
      <path d="M748.3 445V548" />
      <path d="M748.3 171V428" />
      <path d={zigV(741.7, 748.3, T)} />
      <path d={zigV(748.3, 755, T)} />
      <path d={zigV(755, 748.3, T2)} />
      <path d={zigV(884.7, 877.3, T)} />
      <path d={zigV(877.3, 884.7, T2)} />
      <path d="M755 428H764.7M782.3 428H795.7M809.3 428H823M836.7 428H850M867.3 428H942.7V171" />
      <rect x="764.7" y="422.3" width="17.6" height="12.6" />
      <rect x="795.7" y="422.3" width="13.6" height="12.6" />
      <rect x="823" y="422.3" width="13.7" height="12.6" />
      <rect x="850" y="422.3" width="17.3" height="12.6" />
      <path d="M336 171V372.3H347.3" strokeWidth="1.4" stroke="#d8d8d8" />
    </g>
    <rect x="334.5" y="266.5" width="3" height="3" fill="#fff" />
    <rect x="937" y="267" width="12" height="2.4" fill="#fff" />
    <rect x="941" y="426.5" width="3" height="3" fill="#fff" />
    <g fill="none" stroke={RD} strokeWidth="1.2">
      <path d="M255.3 171V428H530" />
      <path d="M347.3 372.3V394.7H494.7V372.3" />
    </g>
    <path d="M642 347H1271" stroke="#5f2a31" strokeWidth="1" />
    <circle cx="255.3" cy="268" r="2" fill={RD} />
    <circle cx="420" cy="394.7" r="1.8" fill={RD} />
    <g fill="none" stroke={YL} strokeWidth="1.2">
      <path d="M318 434.3V620H529.3V437" />
      <path d="M536.7 435V609H741.7V558.3" />
    </g>
    <rect x="637" y="607.5" width="4" height="3" fill={YL} />
    <rect x="421" y="619.5" width="4" height="3" fill={YL} />
    <rect x="316.5" y="618.5" width="3" height="3" fill={YL} />
    <path d="M636.7 171V300" stroke="#2f6e3d" strokeWidth="1" />
    <g stroke="#dcdcdc" strokeWidth="1.2" fill="none">
      <path d="M636.7 300V340M642 345H684" />
      <rect x="632.3" y="340.3" width="9.6" height="9.6" />
      <path d="M639 282L644.5 289L650 282M644.5 289V296" strokeWidth="1.1" />
      <path d="M688 332L700 344M700 332L688 344" strokeWidth="1.2" />
    </g>
    <g stroke="#e8e8e8" strokeWidth="1" fill="none">
      <path d="M131 620H158M168 620H196M163 588V615M163 625V629" />
      <rect x="158.5" y="615.5" width="9" height="9" strokeWidth="1.2" />
    </g>
  </DrawingSvg>
);

const NavCube = () => (
  <CubeSvg width="84" height="88" viewBox="0 0 84 88">
    <circle cx="43" cy="42" r="35" fill="none" stroke="#4c535d" strokeWidth="8" />
    <rect x="27" y="26" width="33" height="33" fill="#bcbdbe" />
    <rect x="33" y="32" width="21" height="21" fill="#9da0a4" />
    <text x="43.5" y="45" textAnchor="middle" fontSize="7" fontFamily="Liberation Sans" fontWeight="700" fill="#555b63" textLength="29" lengthAdjust="spacingAndGlyphs">SUPERIOR</text>
    <g fontFamily="Open Sans, sans-serif" fontWeight="700" fontSize="12" fill="#c5c8cc" textAnchor="middle">
      <text x="43" y="12">N</text>
      <text x="43" y="84">S</text>
      <text x="7" y="47">O</text>
      <text x="79" y="47">E</text>
    </g>
  </CubeSvg>
);

const NavTools = () => (
  <svg width="30" height="198" viewBox="0 0 30 198">
    <g fill="none" stroke="#747a83" strokeWidth="1.4">
      <circle cx="24" cy="5" r="2.5" strokeWidth="1" />
      <circle cx="24" cy="191" r="2.5" strokeWidth="1" />
      <path d="M5 27a10 10 0 0 1 10-10h6v10a10 10 0 0 1-16 0z" />
      <circle cx="15" cy="27" r="7" />
      <path d="M6 70l4-3 4 5V55l2 10V51l3 14V52l2 13V56l3 9c1 5-1 13-5 13h-6c-3 0-5-4-7-8z" strokeWidth="1.2" />
      <path d="M4 83l16 17M20 83L4 100M4 83h5M4 83v5M20 83h-5M20 83v5" strokeWidth="1.2" />
      <circle cx="21" cy="97" r="3.5" />
      <path d="M24 100l3 3" />
      <path d="M14 120v20M14 120l-3 4h6zM5 132c0-3 4-5 9-5s9 2 9 5-4 5-9 5-9-2-9-5z" strokeWidth="1.3" />
      <rect x="4" y="155" width="5" height="5" strokeWidth="1" />
      <rect x="12" y="155" width="5" height="5" strokeWidth="1" />
      <rect x="20" y="155" width="5" height="5" strokeWidth="1" />
      <rect x="4" y="164" width="16" height="11" strokeWidth="1.2" />
    </g>
    <path d="M9 166l7 3.5-7 3.5z" fill="#747a83" />
    <path d="M13 46h4l-2 2.5zM13 111h4l-2 2.5zM13 146h4l-2 2.5z" fill="#747a83" />
  </svg>
);

const tabs: [string, number][] = [['Inserción', 65.5], ['Anotar', 52], ['Paramétrico', 79], ['Vista', 42], ['Administrar', 77], ['Salida', 48], ['Complementos', 95.5], ['A360', 43], ['Performance', 82.5], ['Aplicaciones destacadas', 138.5], ['BIM 360', 59]];

export default function App() {
  return (
    <Page>
      <Global />
      <TopStrip />
      <Window>
        <LogoButton><LogoA /></LogoButton>
        <TitleBar>
          <QuickBar>
            <QuickSlot $w={22}><QNew /></QuickSlot>
            <QuickSlot $w={22}><QOpen /></QuickSlot>
            <QuickSlot $w={23}><QSave /></QuickSlot>
            <QuickSlot $w={22}><QSaveAs /></QuickSlot>
            <QuickSlot $w={22}><QPrint /></QuickSlot>
            <QuickSlot $w={20}><QUndo /></QuickSlot>
            <QuickSlot $w={16}><Caret /></QuickSlot>
            <QuickSlot $w={18}><QUndo dim /></QuickSlot>
            <QuickSlot $w={15}><Caret $c="#999" /></QuickSlot>
            <QuickSlot $w={13}><QMenu /></QuickSlot>
          </QuickBar>
          <AppTitle>Autodesk AutoCAD 2016</AppTitle>
          <SearchGroup>
            <SearchArrow />
            <SearchField>Escriba palabra clave o frase</SearchField>
            <QuickSlot $w={20}><Binoculars /></QuickSlot>
            <QuickSlot $w={25}><UserIcon /></QuickSlot>
            <SignIn>Iniciar sesión</SignIn>
            <QuickSlot $w={22}><Caret /></QuickSlot>
            <QuickSlot $w={18}><XIcon /></QuickSlot>
            <QuickSlot $w={22}><TriIcon /></QuickSlot>
            <QuickSlot $w={8}><Caret /></QuickSlot>
            <SearchDivider />
            <QuickSlot $w={20}><HelpIcon /></QuickSlot>
            <QuickSlot $w={13}><Caret /></QuickSlot>
          </SearchGroup>
          <WinButtons>
            <WinButton><svg width="11" height="2"><rect width="11" height="1" fill="#a8a8a8" /></svg></WinButton>
            <WinButton><svg width="11" height="11"><rect x=".5" y=".5" width="10" height="10" fill="none" stroke="#a8a8a8" /></svg></WinButton>
            <WinButton><svg width="11" height="11"><path d="M.5.5l10 10M10.5.5l-10 10" stroke="#a8a8a8" /></svg></WinButton>
          </WinButtons>
        </TitleBar>

        <TabBar>
          <RibbonTab $w={43} $on>Inicio</RibbonTab>
          {tabs.map(([t, w]) => <RibbonTab key={t} $w={w}>{t}</RibbonTab>)}
          <QuickSlot $w={13} $ml={19}><CloudIcon /></QuickSlot>
          <QuickSlot $w={14}><Caret /></QuickSlot>
        </TabBar>

        <Ribbon>
          <Panel $w={228}>
            <PanelBody>
              <LargeTool $w={42}><LargeIcon><LineIcon /></LargeIcon><LargeLabel>Línea</LargeLabel></LargeTool>
              <LargeTool $w={42}><LargeIcon><PolyIcon /></LargeIcon><LargeLabel>Polilínea</LargeLabel></LargeTool>
              <LargeTool $w={62}><LargeIcon><CircleIcon /></LargeIcon><LargeLabel>Círculo</LargeLabel><LargeCaret /></LargeTool>
              <LargeTool $w={38}><LargeIcon><ArcIcon /></LargeIcon><LargeLabel>Arco</LargeLabel><LargeCaret /></LargeTool>
              <ToolColumn $w={38} $pt={4}>
                <SmallTool><IconSlot $w={28}><RectIcon /></IconSlot><SideCaret $ml={0} /></SmallTool>
                <SmallTool><IconSlot $w={28}><BlobIcon /></IconSlot><SideCaret $ml={0} /></SmallTool>
                <SmallTool><IconSlot $w={28}><HatchIcon /></IconSlot><SideCaret $ml={0} /></SmallTool>
              </ToolColumn>
            </PanelBody>
            <PanelTitle>Dibujo <TitleCaret /></PanelTitle>
          </Panel>

          <Panel $w={278}>
            <PanelBody>
              <ToolGrid>
                <ToolColumn $w={79}>
                  <SmallTool><IconSlot><MoveIcon /></IconSlot><SmallLabel>Desplazar</SmallLabel></SmallTool>
                  <SmallTool><IconSlot><CopyIcon /></IconSlot><SmallLabel>Copiar</SmallLabel></SmallTool>
                  <SmallTool><IconSlot><StretchIcon /></IconSlot><SmallLabel>Estirar</SmallLabel></SmallTool>
                </ToolColumn>
                <ToolColumn $w={73}>
                  <SmallTool><IconSlot><RotateIcon /></IconSlot><SmallLabel>Girar</SmallLabel></SmallTool>
                  <SmallTool><IconSlot><MirrorIcon /></IconSlot><SmallLabel>Simetría</SmallLabel></SmallTool>
                  <SmallTool><IconSlot><ScaleIcon /></IconSlot><SmallLabel>Escala</SmallLabel></SmallTool>
                </ToolColumn>
                <ToolColumn $w={96}>
                  <SmallTool><IconSlot><TrimIcon /></IconSlot><SmallLabel>Recortar</SmallLabel><SideCaret $ml={8} /></SmallTool>
                  <SmallTool><IconSlot><FilletIcon /></IconSlot><SmallLabel>Empalme</SmallLabel><SideCaret $ml={9} /></SmallTool>
                  <SmallTool><IconSlot><ArrayIcon /></IconSlot><SmallLabel>Matriz</SmallLabel><SideCaret $ml={8} /></SmallTool>
                </ToolColumn>
                <ToolColumn $w={20}>
                  <SmallTool><IconSlot><BrushIcon /></IconSlot></SmallTool>
                  <SmallTool><IconSlot><CubeSmall /></IconSlot></SmallTool>
                  <SmallTool><IconSlot><ChainIcon /></IconSlot></SmallTool>
                </ToolColumn>
              </ToolGrid>
            </PanelBody>
            <PanelTitle>Modificar <TitleCaret /></PanelTitle>
          </Panel>

          <Panel $w={171}>
            <PanelBody>
              <LargeTool $w={50}><LargeIcon $h={20}><TextIcon /></LargeIcon></LargeTool>
              <ToolColumn $w={120} $pt={4}>
                <SmallTool>
                  <IconSlot $w={36}><DimIcon w={26} /></IconSlot>
                  <IconSlot $w={16} $ml={6}><DimIcon w={15} /></IconSlot>
                  <SmallLabel>Lineal</SmallLabel><SideCaret $ml={6} />
                </SmallTool>
              </ToolColumn>
            </PanelBody>
            <PanelTitle />
          </Panel>

          <Panel $w={81}>
            <PanelBody>
              <LargeTool $w={46}><LargeIcon $h={20} $mt={1}><InsertIcon /></LargeIcon></LargeTool>
              <ToolColumn $w={24} $pt={4}><SmallTool><IconSlot $w={20}><BlockIcon /></IconSlot></SmallTool></ToolColumn>
            </PanelBody>
            <PanelTitle />
          </Panel>

          <Panel $w={220}>
            <PanelBody>
              <LargeTool $w={64}>
                <LargeIcon $h={22} $mt={1}><MatchIcon /></LargeIcon>
                <LargeLabel $mt={12}>Igualar<br />propiedades</LargeLabel>
              </LargeTool>
              <ToolColumn $w={25} $pt={4}>
                <SmallTool><IconSlot $w={25}><WheelIcon /></IconSlot></SmallTool>
                <SmallTool><IconSlot $w={25}><WeightIcon /></IconSlot></SmallTool>
                <SmallTool><IconSlot $w={25}><TypeIcon /></IconSlot></SmallTool>
              </ToolColumn>
              <ComboStack>
                <Combo><Swatch />PorCapa<ComboCaret /></Combo>
                <Combo><ComboLine $w={55} $c="#f0f0f0" />PorCapa<ComboCaret /></Combo>
                <Combo><ComboLine $w={55} $c="#bdbdbd" />PorCapa<ComboCaret /></Combo>
              </ComboStack>
            </PanelBody>
            <PanelTitle $pr={12}>Propiedades <TitleCaret /><Launcher><LauncherIcon /></Launcher></PanelTitle>
          </Panel>

          <Panel $w={64}>
            <PanelBody>
              <LargeTool $w={40}><LargeIcon><GroupIcon /></LargeIcon><LargeLabel>Grupo</LargeLabel></LargeTool>
              <ToolColumn $w={22} $pt={4}>
                <SmallTool><IconSlot $w={20}><GroupEditIcon /></IconSlot></SmallTool>
                <SmallTool><IconSlot $w={20}><GroupPlusIcon /></IconSlot></SmallTool>
                <SmallTool><IconSlot $w={22} $on><GroupSelIcon /></IconSlot></SmallTool>
              </ToolColumn>
            </PanelBody>
            <PanelTitle>Grupos <TitleCaret /></PanelTitle>
          </Panel>

          <Panel $w={78}>
            <PanelBody>
              <LargeTool $w={54}><LargeIcon><RulerIcon /></LargeIcon><LargeLabel>Medir</LargeLabel><LargeCaret /></LargeTool>
              <ToolColumn $w={20} $pt={4}>
                <SmallTool><IconSlot $w={20}><IdIcon /></IconSlot></SmallTool>
                <SmallTool><IconSlot $w={20}><PointIcon /></IconSlot></SmallTool>
                <SmallTool><IconSlot $w={20}><CalcIcon /></IconSlot></SmallTool>
              </ToolColumn>
            </PanelBody>
            <PanelTitle>Utilidades <TitleCaret /></PanelTitle>
          </Panel>

          <Panel $w={77}>
            <PanelBody>
              <LargeTool $w={52}><LargeIcon><PasteIcon /></LargeIcon><LargeLabel>Pegar</LargeLabel><LargeCaret /></LargeTool>
              <ToolColumn $w={20} $pt={4}>
                <SmallTool><IconSlot $w={20}><ScissorsIcon /></IconSlot></SmallTool>
                <SmallTool><IconSlot $w={20}><CopyDocIcon /></IconSlot></SmallTool>
              </ToolColumn>
            </PanelBody>
            <PanelTitle>Portapapeles</PanelTitle>
          </Panel>

          <Panel $w={56}>
            <PanelBody>
              <LargeTool $w={56}><LargeIcon><BaseIcon /></LargeIcon><LargeLabel>Base</LargeLabel><LargeCaret /></LargeTool>
            </PanelBody>
            <PanelTitle $pr={10}>Vista <TitleCaret /><Launcher $r={3}><LauncherIcon /></Launcher></PanelTitle>
          </Panel>
          <RibbonEnd />
        </Ribbon>

        <Popup>
          <PopupContent>
            <PopupMain>
              <PopupLeft>
                <BigStack />
                <LargeLabel>Propiedades<br />de capa</LargeLabel>
              </PopupLeft>
              <PopupRight>
                <LayerCombo>
                  <svg width="10" height="15"><circle cx="5" cy="5" r="4.5" fill="#f5dc6b" /><rect x="3" y="10" width="4" height="4" fill="#bbb" /></svg>
                  <svg width="15" height="15"><circle cx="7.5" cy="7.5" r="3.6" fill="#f5dc6b" /><path d="M7.5 0v15M0 7.5h15M2 2l11 11M13 2L2 13" stroke="#d8c37a" /></svg>
                  <svg width="15" height="14"><rect x="1" y="7" width="9" height="7" fill="#e8c24e" /><path d="M7 7V4a3 3 0 0 1 6 0v2" fill="none" stroke="#ddd" /></svg>
                  <LayerSwatch />0
                  <ComboCaret />
                </LayerCombo>
                <LayerRow>
                  <LayerSlot><L><Bulb c="#8cc4ee" /></L></LayerSlot>
                  <LayerSlot><L n={3} blue><path d="M11 13l5 4M16 13v4h-4" stroke="#ccc" fill="none" /></L></LayerSlot>
                  <LayerSlot><L><Snow c="#6fa8e0" /></L></LayerSlot>
                  <LayerSlot><L><Lk c="#a8a8a8" /></L></LayerSlot>
                  <LayerSlot><L n={3}><path d="M11 2l4 4-4 1z" fill="#7fa8d6" /></L></LayerSlot>
                  <LayerText>Establecer como actual</LayerText>
                </LayerRow>
                <LayerRow>
                  <LayerSlot><L n={3}><Bulb c="#e8a22e" /></L></LayerSlot>
                  <LayerSlot><L n={3} blue><path d="M11 17l5-4M16 17v-4h-4" stroke="#ccc" fill="none" /></L></LayerSlot>
                  <LayerSlot><L n={3}><Snow c="#e8c83e" /><circle cx="13" cy="11" r="3" fill="#f0d545" /></L></LayerSlot>
                  <LayerSlot><L><Lk c="#e0a92e" /></L></LayerSlot>
                  <LayerSlot><L n={3}><circle cx="14" cy="13" r="3.6" fill="#a8582a" /></L></LayerSlot>
                  <LayerText>Igualar capa</LayerText>
                </LayerRow>
              </PopupRight>
            </PopupMain>
            <PopupTitle>Capas</PopupTitle>
          </PopupContent>
          <PopupSide><SideArrow /></PopupSide>
        </Popup>

        <FileBar>
          <FileTab $w={122} $pl={14}>Inicio</FileTab>
          <FileTab $w={118} $ml={-2} $pl={10} $on>Caja(1).dxf*<CloseMark>✕</CloseMark></FileTab>
          <AddTab $ml={4} $w={21} $h={17} $c="#484848">+</AddTab>
        </FileBar>

        <Canvas>
          <CommandBar>
            <CommandTools>
              <svg width="5" height="18"><path d="M1 0v18M4 0v18" stroke="#a0a0a0" strokeDasharray="1.5 1" /></svg>
              <QuickSlot $w={19}><svg width="10" height="10"><path d="M1 1l8 8M9 1l-8 8" stroke="#e4e4e4" strokeWidth="1.5" /></svg></QuickSlot>
              <QuickSlot $w={22}><svg width="15" height="15"><path d="M4 1a3.5 3.5 0 0 1 4 4l6 7-2 2-7-6a3.5 3.5 0 0 1-4-4l2 2 2-1 1-2z" fill="#d4d4d4" /></svg></QuickSlot>
            </CommandTools>
            <CommandPrompt>
              <PromptIcon>&gt;_</PromptIcon>
              <Caret $c="#666" />
              <CommandText>Escriba un comando</CommandText>
              <CommandEnd />
            </CommandPrompt>
          </CommandBar>
          <Drawing />
          <ViewLabel>[−][Superior][Estructura alámbrica 2D]</ViewLabel>
          <ViewButtons width="50" height="12" viewBox="0 0 50 12">
            <rect x="1" y="7" width="10" height="2" fill="#eee" />
            <rect x="23" y="3" width="7" height="7" fill="none" stroke="#eee" strokeWidth="1.4" />
            <path d="M25 1h7v7" fill="none" stroke="#eee" strokeWidth="1.2" />
            <path d="M39 1.5l8 8M47 1.5l-8 8" stroke="#eee" strokeWidth="2" />
          </ViewButtons>
          <NavCube />
          <ScuPill>SCU<ScuDash /></ScuPill>
          <NavBar><NavTools /></NavBar>
        </Canvas>

        <BottomArea>
          <LayoutTabs>
            <LayoutTab $w={62} $on>Modelo</LayoutTab>
            <LayoutTab $w={61}>Layout1</LayoutTab>
            <LayoutTab $w={62}>Layout2</LayoutTab>
            <LayoutPlus $w={22}>+</LayoutPlus>
          </LayoutTabs>
          <StatusBar>
            <StatusGroup $w={53}><StatusCell>MODELO</StatusCell></StatusGroup>
            <StatusGroup $w={61}><StatusCell $w={22}><GridIcon /></StatusCell><StatusCell $w={22}><GridIcon fine /></StatusCell><StatusCell><Caret /></StatusCell></StatusGroup>
            <StatusGroup $w={97}><StatusCell $w={22}><OrthoIcon /></StatusCell><StatusCell $w={22}><PolarIcon /></StatusCell><StatusCell $w={16}><Caret /></StatusCell><StatusCell $w={20}><IsoIcon /></StatusCell><StatusCell><Caret /></StatusCell></StatusGroup>
            <StatusGroup $w={60}><StatusCell $w={18}><AngleIcon /></StatusCell><StatusCell $w={26}><SnapIcon /></StatusCell><StatusCell><Caret /></StatusCell></StatusGroup>
            <StatusGroup $w={100}><StatusCell $w={23}><AnnoIcon c="#2f7fe0" /></StatusCell><StatusCell $w={21}><AnnoIcon c="#a8a8a8" /></StatusCell><StatusCell $w={22}><AnnoIcon c="#a8a8a8" /></StatusCell><StatusCell $w={20}>1:1</StatusCell><StatusCell><Caret /></StatusCell></StatusGroup>
            <StatusGroup $w={38}><StatusCell $w={24}><GearIcon /></StatusCell><StatusCell><Caret /></StatusCell></StatusGroup>
            <StatusGroup $w={24}><StatusCell><PlusIcon /></StatusCell></StatusGroup>
            <StatusGroup $w={25}><StatusCell><ShapesIcon /></StatusCell></StatusGroup>
            <StatusGroup $w={24}><StatusCell><BlueCircle /></StatusCell></StatusGroup>
            <StatusGroup $w={29}><StatusCell><GraphIcon /></StatusCell></StatusGroup>
            <StatusGroup $w={46}><StatusCell><FullIcon /></StatusCell><StatusCell><MenuIcon /></StatusCell></StatusGroup>
          </StatusBar>
        </BottomArea>
      </Window>

      <GapStrip>
        <Portrait />
        <DocName><DocGlyph />Night.docx</DocName>
      </GapStrip>

      <Taskbar>
        <TaskSlot $w={45}><WinLogo /></TaskSlot>
        <TaskSlot $w={45}><SearchIcon /></TaskSlot>
        <TaskSlot $w={45}><TaskView /></TaskSlot>
        <TaskSlot $w={2} />
        <TaskApp><ExplorerIcon /></TaskApp>
        <TaskApp><ChromeIcon /></TaskApp>
        <TaskApp $on><TaskAcad /></TaskApp>
        <TrayArea>
          <TrayIcon $w={25}><svg width="12" height="7"><path d="M1 6l5-5 5 5" fill="none" stroke="#ddd" strokeWidth="1.2" /></svg></TrayIcon>
          <TrayIcon $w={24}><TrayWifi /></TrayIcon>
          <TrayIcon $w={21}><TrayE /></TrayIcon>
          <TrayIcon $w={23}><TrayBatt /></TrayIcon>
          <TrayIcon $w={22}><TraySound /></TrayIcon>
          <Clock>01:48 p. m.<br />3/05/2018</Clock>
          <TrayIcon $w={40}><TrayChat /></TrayIcon>
          <TrayIcon $w={11} />
        </TrayArea>
      </Taskbar>
    </Page>
  );
}
